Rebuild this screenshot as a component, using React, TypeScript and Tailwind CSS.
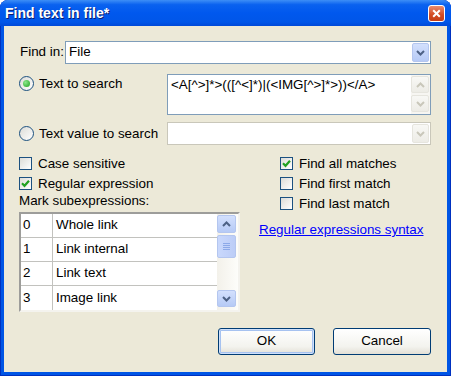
import React from 'react';

const Chevron = ({ up = false, color = '#4D6185' }: { up?: boolean; color?: string }) => (
    <svg width="9" height="6" viewBox="0 0 9 6" className="block">
        <path d={up ? 'M1 5 L4.5 1.5 L8 5' : 'M1 1 L4.5 4.5 L8 1'} fill="none" stroke={color} strokeWidth="2" />
    </svg>
);

const ArrowBtn = ({ up = false, disabled = false, className = '' }: { up?: boolean; disabled?: boolean; className?: string }) => (
    <div
        className={`flex items-center justify-center rounded-[2px] border ${
            disabled
                ? 'border-[#E6E5DE] bg-[linear-gradient(180deg,#F8F8F5,#EDECE6)]'
                : 'border-[#B4C6EF] bg-[linear-gradient(180deg,#D3E0FD,#B6CAF6)]'
        } ${className}`}
    >
        <Chevron up={up} color={disabled ? '#C9C7BA' : '#4D6185'} />
    </div>
);

const Check = ({ checked, label }: { checked?: boolean; label: string }) => (
    <div className="flex items-center h-[13px]">
        <div className="w-[13px] h-[13px] shrink-0 border border-[#1C5180] bg-[linear-gradient(135deg,#DCDCD7,#FFFFFF)] flex items-center justify-center">
            {checked && (
                <svg width="9" height="9" viewBox="0 0 9 9" className="block">
                    <path d="M1 4.3 L3.5 6.8 L8 1.8" fill="none" stroke="#21A121" strokeWidth="2.2" />
                </svg>
            )}
        </div>
        <span className="ml-[6px] leading-[13px] whitespace-nowrap">{label}</span>
    </div>
);

const Radio = ({ checked, label }: { checked?: boolean; label: string }) => (
    <div className="flex items-center">
        <div className="w-[15px] h-[15px] shrink-0 rounded-full border border-[#1C5180] bg-[linear-gradient(135deg,#DCDCD7,#FFFFFF)] flex items-center justify-center">
            {checked && <div className="w-[7px] h-[7px] rounded-full bg-[radial-gradient(circle_at_35%_35%,#8AE88A,#21A121)]" />}
        </div>
        <span className="ml-[5px] leading-[15px] whitespace-nowrap">{label}</span>
    </div>
);

const rows = [
    ['0', 'Whole link'],
    ['1', 'Link internal'],
    ['2', 'Link text'],
    ['3', 'Image link'],
];

export default function App() {
    return (
        <div className="w-[451px] h-[376px] flex flex-col bg-[#0055E5] rounded-t-[8px] overflow-hidden font-['Liberation_Sans',Arial,sans-serif] shadow-[inset_1px_0_0_#0031C0,inset_-1px_0_0_#0031C0,inset_0_-1px_0_#0031C0]">
            {/* title bar */}
            <div className="h-[26px] shrink-0 flex items-center bg-[linear-gradient(180deg,#3D8EF6_0%,#0A62EF_18%,#0058EE_50%,#0056E8_85%,#0049D8_100%)] pl-[5px] pr-[6px]">
                <span className="flex-1 text-white font-bold text-[14px] leading-[18px] [text-shadow:1px_1px_0_#0A1E6E]">Find text in file*</span>
                <div className="w-[17px] h-[17px] rounded-[3px] border border-white bg-[linear-gradient(180deg,#E98C6E,#D24A22_60%,#C33E17)] flex items-center justify-center">
                    <svg width="9" height="9" viewBox="0 0 9 9" className="block">
                        <path d="M1.2 1.2 L7.8 7.8 M7.8 1.2 L1.2 7.8" stroke="#FFFFFF" strokeWidth="2" />
                    </svg>
                </div>
            </div>

            <div className="flex-1 flex px-[4px] pb-[4px]">
                <div className="flex-1 bg-[#ECE9D8] flex flex-col pl-[15px] pr-[16px] text-[13.4px] text-black">
                    {/* find in */}
                    <div className="mt-[15px] flex items-center h-[23px]">
                        <span className="w-[46px] pl-[1px]">Find in:</span>
                        <div className="flex-1 h-full border border-[#7F9DB9] bg-white flex items-center pl-[3px] pr-[1px]">
                            <span className="flex-1">File</span>
                            <ArrowBtn className="w-[17px] h-[19px]" />
                        </div>
                    </div>

                    {/* text to search */}
                    <div className="mt-[10px] flex items-start">
                        <div className="w-[148px] pt-[2px]">
                            <Radio checked label="Text to search" />
                        </div>
                        <div className="flex-1 h-[41px] border border-[#7F9DB9] bg-white flex">
                            <div className="flex-1 pl-[3px] pt-[2px] leading-[16px] whitespace-nowrap">{'<A[^>]*>(([^<]*)|(<IMG[^>]*>))</A>'}</div>
                            <div className="w-[19px] flex flex-col gap-[2px] pt-[1px] pr-[1px] bg-[#F7F6F2]">
                                <ArrowBtn up disabled className="w-[18px] h-[17px]" />
                                <ArrowBtn disabled className="w-[18px] h-[17px]" />
                            </div>
                        </div>
                    </div>

                    {/* text value to search */}
                    <div className="mt-[7px] flex items-center h-[23px]">
                        <div className="w-[148px]">
                            <Radio label="Text value to search" />
                        </div>
                        <div className="flex-1 h-full border border-[#C9C7BA] bg-white flex items-center justify-end pr-[1px]">
                            <ArrowBtn disabled className="w-[17px] h-[19px]" />
                        </div>
                    </div>

                    {/* options */}
                    <div className="mt-[12px] flex">
                        <div className="w-[221px] flex flex-col">
                            <Check label="Case sensitive" />
                            <div className="mt-[7px]">
                                <Check checked label="Regular expression" />
                            </div>
                            <div className="mt-[3px] leading-[16px]">Mark subexpressions:</div>
                            <div className="mt-[3px] h-[100px] flex border-2 border-t-[#9D9D9A] border-l-[#9D9D9A] border-b-[#F4F3EE] border-r-[#F4F3EE] bg-white">
                                <div className="flex-1 flex flex-col">
                                    {rows.map(([n, name], i) => (
                                        <div key={n} className={`h-[24px] flex ${i < 3 ? 'border-b border-[#C2C2BE]' : ''}`}>
                                            <div className="w-[32px] border-r border-[#C2C2BE] pl-[2px] flex items-center">{n}</div>
                                            <div className="flex-1 pl-[3px] flex items-center">{name}</div>
                                        </div>
                                    ))}
                                </div>
                                <div className="w-[21px] flex flex-col pt-[1px] pb-[3px] bg-[linear-gradient(90deg,#F3F1EA,#FDFDFA)]">
                                    <ArrowBtn up className="w-[19px] h-[18px]" />
                                    <div className="mt-[2px] w-[19px] h-[23px] rounded-[2px] border border-[#B4C6EF] bg-[linear-gradient(90deg,#C9D8FC,#BCCDF7)] flex flex-col items-center justify-center gap-[1px]">
                                        {[0, 1, 2, 3].map((k) => (
                                            <div key={k} className="w-[7px] h-[1px] bg-[#8CA9E8]" />
                                        ))}
                                    </div>
                                    <div className="flex-1" />
                                    <ArrowBtn className="w-[19px] h-[17px]" />
                                </div>
                            </div>
                        </div>

                        <div className="ml-[19px] flex flex-col">
                            <div className="pl-[21px] flex flex-col gap-[7px]">
                                <Check checked label="Find all matches" />
                                <Check label="Find first match" />
                                <Check label="Find last match" />
                            </div>
                            <span className="mt-[12px] leading-[16px] text-[#0000FF] underline">Regular expressions syntax</span>
                        </div>
                    </div>

                    {/* buttons */}
                    <div className="mt-auto pb-[17px] flex justify-end gap-[18px]">
                        <div className="w-[97px] h-[27px] rounded-[3px] border border-[#003C74] bg-[linear-gradient(180deg,#FFFFFF,#F3F3EE_70%,#E3E0D6)] shadow-[inset_0_0_0_1px_#CFE0FB,inset_0_0_0_2px_#A6C2F0] flex items-center justify-center">OK</div>
                        <div className="w-[98px] h-[27px] rounded-[3px] border border-[#003C74] bg-[linear-gradient(180deg,#FFFFFF,#F3F3EE_70%,#E3E0D6)] flex items-center justify-center">Cancel</div>
                    </div>
                </div>
            </div>
        </div>
    );
}
